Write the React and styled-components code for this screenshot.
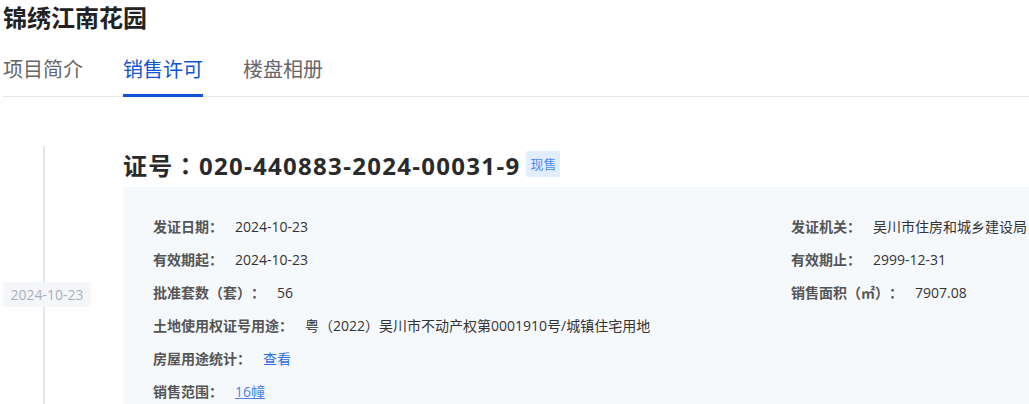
import styled, { createGlobalStyle } from "styled-components";

const GlobalStyle = createGlobalStyle`
  body {
    margin: 0;
    background: #fff;
    font-family: "Open Sans", "Noto Sans CJK SC", sans-serif;
    color: #333;
    text-spacing-trim: space-all;
  }
`;

const Page = styled.div`
  padding: 0 0 0 3px;
  overflow: hidden;
  height: 404px;
`;

const Title = styled.h1`
  margin: 0;
  padding-top: 4px;
  font-size: 24px;
  line-height: 28px;
  font-weight: 700;
  color: #222;
`;

const Tabs = styled.div`
  display: flex;
  gap: 40px;
  margin-top: 24px;
  border-bottom: 1px solid #e6e6e6;
`;

const Tab = styled.div`
  font-size: 20px;
  line-height: 28px;
  padding-bottom: 10px;
  margin-bottom: -1px;
  color: ${(p) => (p.$active ? "#0f56d5" : "#666")};
  border-bottom: 3px solid ${(p) => (p.$active ? "#0b55d6" : "transparent")};
`;

const Item = styled.div`
  display: flex;
  margin-top: 49px;
`;

const Aside = styled.div`
  position: relative;
  width: 120px;
  flex-shrink: 0;
  display: flex;
  align-items: center;
  padding-top: 12px;

  &::before {
    content: "";
    position: absolute;
    left: 40px;
    top: 0;
    bottom: 0;
    width: 2px;
    background: #e3e7ed;
  }
`;

const DateBox = styled.div`
  position: relative;
  width: 88px;
  height: 25px;
  line-height: 25px;
  text-align: center;
  font-size: 14px;
  color: #aab0bb;
  background: #f5f6f9;
  border-radius: 2px;
`;

const Body = styled.div`
  flex: 1;
`;

const CertHeading = styled.div`
  display: flex;
  align-items: center;
  height: 36px;
  margin-bottom: 5px;
`;

const CertNo = styled.h2`
  margin: 0;
  font-family: "Open Sans", "Noto Sans CJK TC", sans-serif;
  font-size: 24px;
  font-weight: 700;
  letter-spacing: 1.3px;
  color: #2a2a2a;
  white-space: nowrap;
`;

const Badge = styled.span`
  margin-left: 6px;
  padding: 0 4px;
  height: 26px;
  line-height: 26px;
  font-size: 13px;
  color: #4a8cf3;
  background: #e2eeff;
  border-radius: 2px;
`;

const Panel = styled.div`
  background: #f6f9fc;
  padding: 29px 30px 30px;
  display: grid;
  grid-template-columns: 638px 1fr;
  row-gap: 13px;
`;

const Field = styled.div`
  display: flex;
  align-items: center;
  height: 20px;
  white-space: nowrap;
  grid-column: ${(p) => (p.$wide ? "1 / -1" : "auto")};
`;

const Label = styled.span`
  font-size: 14px;
  font-weight: 600;
  color: #555;
  margin-right: 12px;
`;

const Value = styled.span`
  font-size: 14px;
  color: #333;
`;

const Link = styled.a`
  font-size: 14px;
  color: ${(p) => (p.$under ? "#4a7fe8" : "#2d6ee0")};
  text-decoration: ${(p) => (p.$under ? "underline" : "none")};
`;

export default function App() {
  return (
    <Page>
      <GlobalStyle />
      <Title>锦绣江南花园</Title>
      <Tabs>
        <Tab>项目简介</Tab>
        <Tab $active>销售许可</Tab>
        <Tab>楼盘相册</Tab>
      </Tabs>
      <Item>
        <Aside>
          <DateBox>2024-10-23</DateBox>
        </Aside>
        <Body>
          <CertHeading>
            <CertNo>证号：020-440883-2024-00031-9</CertNo>
            <Badge>现售</Badge>
          </CertHeading>
          <Panel>
            <Field>
              <Label>发证日期：</Label>
              <Value>2024-10-23</Value>
            </Field>
            <Field>
              <Label>发证机关：</Label>
              <Value>吴川市住房和城乡建设局</Value>
            </Field>
            <Field>
              <Label>有效期起：</Label>
              <Value>2024-10-23</Value>
            </Field>
            <Field>
              <Label>有效期止：</Label>
              <Value>2999-12-31</Value>
            </Field>
            <Field>
              <Label>批准套数（套）：</Label>
              <Value>56</Value>
            </Field>
            <Field>
              <Label>销售面积（㎡）：</Label>
              <Value>7907.08</Value>
            </Field>
            <Field $wide>
              <Label>土地使用权证号用途：</Label>
              <Value>粤（2022）吴川市不动产权第0001910号/城镇住宅用地</Value>
            </Field>
            <Field $wide>
              <Label>房屋用途统计：</Label>
              <Link href="#">查看</Link>
            </Field>
            <Field $wide>
              <Label>销售范围：</Label>
              <Link href="#" $under>16幢</Link>
            </Field>
          </Panel>
        </Body>
      </Item>
    </Page>
  );
}
